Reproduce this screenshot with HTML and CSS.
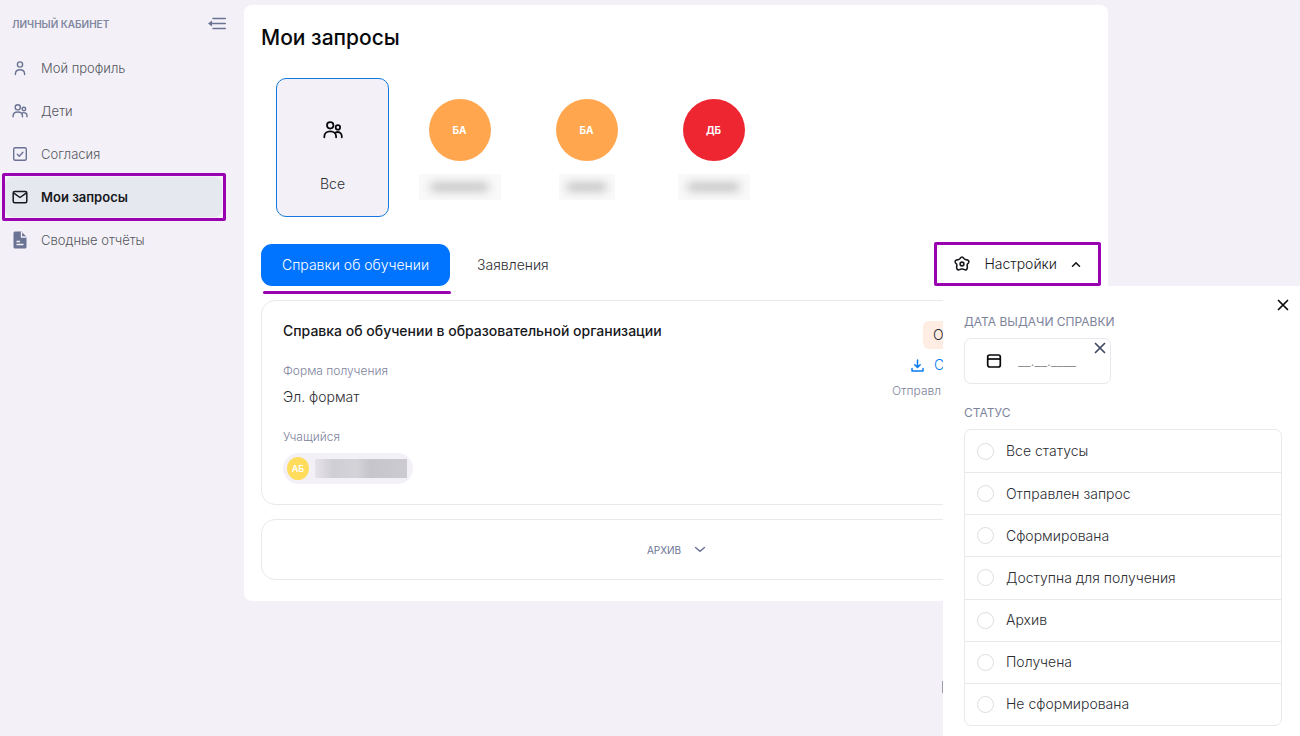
FILE: index.html
```html
<!DOCTYPE html>
<html lang="ru">
<head>
<meta charset="utf-8">
<title>Мои запросы</title>
<link rel="stylesheet" href="styles.css">
</head>
<body>
<svg class="sprite" aria-hidden="true">
  <symbol id="people" viewBox="0 0 18 18">
    <g fill="none" stroke="currentColor" stroke-width="1.6" stroke-linecap="round">
      <circle cx="6.5" cy="4.8" r="2.9"/><circle cx="13.4" cy="6.7" r="2"/>
      <path d="M1.2 15.6v-.8c0-2.7 2.2-4.6 5.3-4.6s5.300 1.900 5.300 4.600v.8M11.600 11.100c2.900-1 5.300.8 5.300 3.300v1.200"/>
    </g>
  </symbol>
  <symbol id="cross" viewBox="0 0 12 12"><path d="M1.500 1.500l9 9M10.500 1.500l-9 9" fill="none" stroke="currentColor" stroke-width="1.700" stroke-linecap="round"/></symbol>
</svg>
<div class="page">
  <aside class="sidebar">
    <div class="sidebar-head">
      <span>ЛИЧНЫЙ КАБИНЕТ</span>
      <button class="plain collapse" aria-label="Свернуть меню">
        <svg width="18" height="13" viewBox="0 0 18 13"><path d="M5 1.500h12.300M3 6.500h14.300M5 11.500h12.300" fill="none" stroke="currentColor" stroke-width="1.500" stroke-linecap="round"/><path d="M0 6.500L4 3.500v6z" fill="currentColor"/></svg>
      </button>
    </div>
    <nav class="menu">
      <a href="#"><svg width="16" height="16" viewBox="0 0 16 16"><g fill="none" stroke="currentColor" stroke-width="1.400" stroke-linecap="round"><circle cx="8" cy="4.500" r="2.600"/><path d="M3.400 14.500v-.6c0-2.600 1.900-4.200 4.600-4.200s4.600 1.600 4.600 4.200v.6"/></g></svg>Мой профиль</a>
      <a href="#"><svg width="16" height="16"><use href="#people"/></svg>Дети</a>
      <a href="#"><svg width="16" height="16" viewBox="0 0 16 16"><g fill="none" stroke="currentColor" stroke-width="1.400" stroke-linecap="round" stroke-linejoin="round"><rect x="1.700" y="1.700" width="12.600" height="12.600" rx="1.500"/><path d="M5.300 8.200l2 2 3.600-4"/></g></svg>Согласия</a>
      <a href="#" class="active" aria-current="page"><svg width="16" height="16" viewBox="0 0 16 16"><g fill="none" stroke="currentColor" stroke-width="1.500" stroke-linejoin="round"><rect x="1.200" y="2.500" width="13.600" height="11.200" rx="1.500"/><path d="M1.500 3.800L8 8.500l6.500-4.700"/></g></svg>Мои запросы</a>
      <a href="#"><svg width="16" height="18" viewBox="0 0 16 18"><path d="M3 .5h6.300L14.500 5.800V16a1.500 1.500 0 0 1-1.500 1.500H3A1.500 1.500 0 0 1 1.500 16V2A1.500 1.500 0 0 1 3 .5z" fill="currentColor"/><path d="M9.500 1v5h5M4.500 10.500H8M4.500 13.500h7" fill="none" stroke="#f3f1f7" stroke-width="1.300"/></svg>Сводные отчёты</a>
    </nav>
  </aside>

  <main class="content">
    <h1>Мои запросы</h1>
    <div class="people">
      <button class="person selected"><span class="person-pic"><svg width="20" height="20"><use href="#people"/></svg></span><span>Все</span></button>
      <button class="person"><span class="avatar orange">БА</span><span class="hidden-name long"></span></button>
      <button class="person"><span class="avatar orange">БА</span><span class="hidden-name short"></span></button>
      <button class="person"><span class="avatar red">ДБ</span><span class="hidden-name"></span></button>
    </div>

    <div class="toolbar">
      <button class="tab current">Справки об обучении</button>
      <button class="tab">Заявления</button>
      <button class="settings" aria-expanded="true">
        <svg width="16" height="16" viewBox="0 0 16 16"><g fill="none" stroke="currentColor" stroke-width="1.600" stroke-linejoin="round"><path d="M6.100 2.500Q8-.4 9.900 2.500Q10.400 3.500 11.700 3.600Q15.800 3.900 14.500 6.800Q12.800 8.200 13.200 9.600Q13.900 13.900 11.200 13.900Q9.200 12.900 8 13Q6.800 12.900 4.800 13.900Q2.100 13.900 2.800 9.600Q3.200 8.200 1.500 6.800Q.2 3.900 4.300 3.600Q5.600 3.500 6.100 2.500Z"/><circle cx="8" cy="8" r="1.900"/></g></svg>
        <span>Настройки</span>
        <svg width="10" height="7" viewBox="0 0 10 7"><path d="M1.500 5.200L5 1.900l3.500 3.300" fill="none" stroke="currentColor" stroke-width="1.500" stroke-linecap="round"/></svg>
      </button>
    </div>

    <section class="request">
      <div class="request-info">
        <h2>Справка об обучении в образовательной организации</h2>
        <dl>
          <dt>Форма получения</dt><dd>Эл. формат</dd>
          <dt>Учащийся</dt><dd class="student"><span class="mini">АБ</span><span class="hidden-student"></span></dd>
        </dl>
      </div>
      <div class="request-state">
        <span class="badge">О</span>
        <a href="#" class="download"><svg width="13" height="13" viewBox="0 0 13 13"><path d="M6.500 1v7M3.800 5.700l2.700 2.700 2.700-2.700M1 9.500V12h11V9.500" fill="none" stroke="currentColor" stroke-width="1.500" stroke-linecap="round" stroke-linejoin="round"/></svg>С</a>
        <span class="sent">Отправл</span>
      </div>
    </section>

    <button class="archive">АРХИВ <svg width="12" height="7" viewBox="0 0 12 7"><path d="M1.500 1.500L6 5.300l4.500-3.800" fill="none" stroke="currentColor" stroke-width="1.500" stroke-linecap="round"/></svg></button>
  </main>
</div>

<form class="panel">
  <button type="button" class="plain close" aria-label="Закрыть"><svg width="12" height="12"><use href="#cross"/></svg></button>
  <label class="caption" for="issued">ДАТА ВЫДАЧИ СПРАВКИ</label>
  <div class="date">
    <svg width="16" height="16" viewBox="0 0 16 16"><g fill="none" stroke="currentColor" stroke-width="1.700"><rect x="1.700" y="2" width="12.600" height="12" rx="2"/><path d="M1.700 6h12.600"/></g></svg>
    <input id="issued" type="text" placeholder="__.__.____">
    <button type="button" class="plain clear" aria-label="Очистить"><svg width="12" height="12"><use href="#cross"/></svg></button>
  </div>
  <fieldset>
    <legend class="caption">СТАТУС</legend>
    <div class="statuses">
      <label><input type="radio" name="status">Все статусы</label>
      <label><input type="radio" name="status">Отправлен запрос</label>
      <label><input type="radio" name="status">Сформирована</label>
      <label><input type="radio" name="status">Доступна для получения</label>
      <label><input type="radio" name="status">Архив</label>
      <label><input type="radio" name="status">Получена</label>
      <label><input type="radio" name="status">Не сформирована</label>
    </div>
  </fieldset>
</form>
</body>
</html>
```

FILE: styles.css
```css
* { box-sizing: border-box; }
body {
  margin: 0;
  min-height: 100vh;
  position: relative;
  overflow: hidden;
  background: #f3f1f7;
  color: #2c2e33;
  font: 300 14px/20px Inter, "Liberation Sans", sans-serif;
}
button, input { font: inherit; color: inherit; }
button { border: 0; background: none; padding: 0; cursor: pointer; }
a { color: inherit; text-decoration: none; }
svg { flex: none; display: block; }
.sprite { position: absolute; width: 0; height: 0; }

.page { display: flex; align-items: flex-start; padding: 5px 192px 0 0; }
.sidebar { flex: none; width: 244px; padding-right: 18px; }
.sidebar-head {
  display: flex; justify-content: space-between; align-items: center;
  height: 37px; padding-left: 12px;
  color: #8187a0; font-size: 10px; font-weight: 600;
}
.collapse { color: #6b7394; }
.menu { display: flex; flex-direction: column; gap: 3px; padding: 6px 4px 0 5px; font-size: 13px; }
.menu a {
  position: relative;
  display: flex; align-items: center; gap: 13px;
  height: 40px; padding-left: 7px; border-radius: 8px;
  color: #55575e;
}
.menu svg { color: #6b7394; }
.menu .active { background: #e6e8ef; color: #17181c; font-weight: 600; }
.menu .active svg { color: #17181c; }
.menu .active::after {
  content: ""; position: absolute; inset: -4px -4px -4px -3px;
  border: 3px solid #9800b0; border-radius: 2px;
}

.content { flex: 1; min-width: 0; padding: 17px 16px 21px 17px; background: #fff; border-radius: 8px; }
h1 { margin: 0; font-size: 21px; line-height: 32px; font-weight: 500; color: #08090b; }
.people { display: flex; gap: 14px; padding: 24px 15px 0; }
.person {
  display: flex; flex-direction: column; align-items: center; gap: 13px;
  width: 113px; height: 139px; padding: 21px 0 0;
  border-radius: 10px;
}
.selected { padding-top: 20px; border: 1px solid #1479dc; background: #f3f1f7; }
.person-pic { display: grid; place-items: center; height: 62px; color: #08090b; }
.avatar {
  display: grid; place-items: center; width: 62px; height: 62px;
  border-radius: 50%; color: #fff; font-size: 10px; font-weight: 700;
}
.orange { background: #ffa64f; }
.red { background: #ee2632; }
.hidden-name {
  display: grid; place-items: center; overflow: hidden;
  width: 72px; height: 26px; background: #f9f9f9;
}
.hidden-name::before { content: ""; width: 70%; height: 8px; background: #bdbdbd; filter: blur(5px); }
.long { width: 82px; }
.short { width: 56px; }

.toolbar { display: flex; align-items: center; margin-top: 27px; }
.tab { position: relative; height: 42px; padding: 0 21px; border-radius: 11px; font-size: 14px; margin-right: 6px; }
.current { background: #0073ff; color: #fff; }
.current::after {
  content: ""; position: absolute; left: 2px; right: -1px; top: 47px;
  height: 3px; border-radius: 2px; background: #9800b0;
}
.settings {
  display: flex; align-items: center; gap: 14px;
  height: 44px; margin: -2px -9px 0 auto; padding: 0 17px;
  border: 3px solid #9800b0; border-radius: 2px;
  font-size: 14px; color: #17181c;
}

.request {
  display: flex; justify-content: space-between;
  margin-top: 14px; padding: 20px 21px;
  border: 1px solid #e8e8ed; border-radius: 14px;
}
h2 { margin: 0; font-size: 14px; line-height: 20px; font-weight: 500; color: #17181c; }
dl { margin: 20px 0 0; }
dt { color: #7d839b; font-size: 12px; }
dd { margin: 6px 0 20px; }
dd.student {
  display: inline-flex; align-items: center; gap: 6px;
  margin: 6px 0 0; padding: 4px 6px 4px 4px;
  border-radius: 16px; background: #f3f1f7;
}
.mini {
  display: grid; place-items: center; width: 22px; height: 23px;
  border-radius: 50%; background: #ffdc5c; color: #fff; font-size: 9px; font-weight: 600;
}
.hidden-student { width: 92px; height: 19px; background: linear-gradient(90deg, #e6e4ea, #cfced4 20%, #d4d3d8 45%, #c6c5cb 60%, #cccbd1); }
.request-state { display: flex; flex-direction: column; align-items: flex-start; width: 178px; }
.badge { margin: 0 0 6px 31px; padding: 4px 10px; border-radius: 6px; background: #ffece3; font-size: 14px; }
.download { display: flex; align-items: center; gap: 10px; margin-left: 19px; color: #0a7cf0; }
.sent { margin-top: 6px; color: #7d839b; font-size: 12px; }
.archive {
  display: flex; justify-content: center; align-items: center; gap: 13px;
  width: 100%; height: 61px; margin-top: 14px;
  border: 1px solid #e8e8ed; border-radius: 14px;
  color: #6b7394; font-size: 10px; font-weight: 400;
}

.panel {
  position: absolute; top: 286px; right: 0; bottom: 0; width: 357px;
  display: flex; flex-direction: column; align-items: flex-start;
  padding: 26px 18px 10px 21px; background: #fff;
}
.panel::before { content: ""; position: absolute; left: -1px; top: 395px; width: 1px; height: 12px; background: #9a9cab; }
.caption { padding: 0; color: #7d839b; font-size: 12px; line-height: 20px; font-weight: 400; }
.close { position: absolute; top: 13px; right: 11px; color: #08090b; }
.date {
  position: relative; display: flex; align-items: center; gap: 16px;
  width: 147px; height: 46px; margin-top: 6px; padding: 0 10px 0 21px;
  border: 1px solid #e8e8ed; border-radius: 7px; color: #08090b;
}
.date input { width: 100%; min-width: 0; padding: 0; border: 0; background: none; outline: 0; font-size: 14px; }
.date input::placeholder { color: #888; opacity: 1; }
.clear { position: absolute; top: 3px; right: 4px; color: #3f4762; }
fieldset { display: flex; flex-direction: column; flex: 1; width: 100%; margin: 19px 0 0; padding: 0; border: 0; }
.statuses { flex: 1; display: grid; grid-auto-rows: 1fr; margin-top: 6px; border: 1px solid #e8e8ed; border-radius: 7px; }
.statuses label { display: flex; align-items: center; gap: 12px; padding-left: 12px; }
.statuses label + label { border-top: 1px solid #e8e8ed; }
.statuses input { appearance: none; width: 17px; height: 17px; margin: 0; border: 1px solid #dcdde2; border-radius: 50%; }
```
